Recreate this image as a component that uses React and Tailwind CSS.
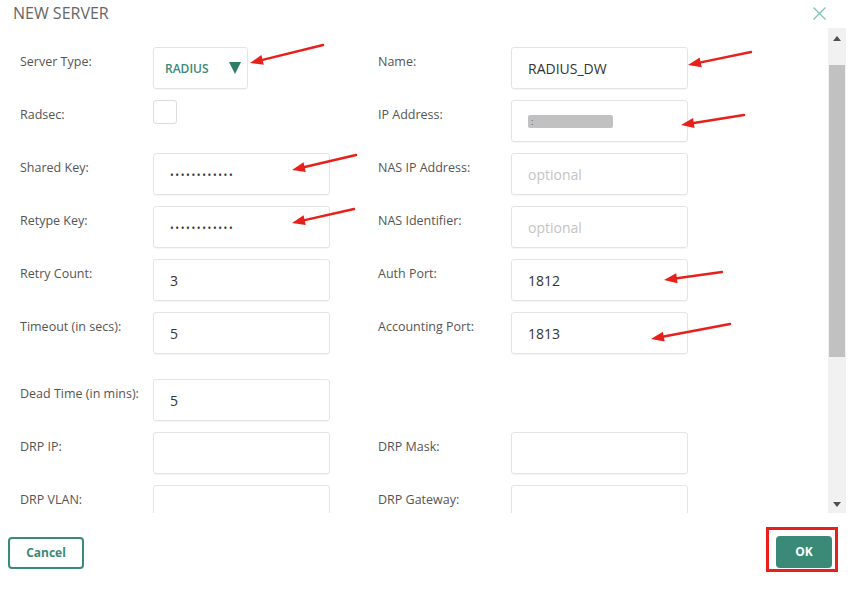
const rows = [
  { left: { label: "Server Type:", kind: "select" }, right: { label: "Name:", value: "RADIUS_DW" } },
  { left: { label: "Radsec:", kind: "checkbox" }, right: { label: "IP Address:", kind: "masked" } },
  { left: { label: "Shared Key:", value: "••••••••••••", kind: "password" }, right: { label: "NAS IP Address:", placeholder: "optional" } },
  { left: { label: "Retype Key:", value: "••••••••••••", kind: "password" }, right: { label: "NAS Identifier:", placeholder: "optional" } },
  { left: { label: "Retry Count:", value: "3" }, right: { label: "Auth Port:", value: "1812" } },
  { left: { label: "Timeout (in secs):", value: "5" }, right: { label: "Accounting Port:", value: "1813" } },
  { left: { label: "Dead Time (in mins):", value: "5" }, right: null, extraTop: true },
  { left: { label: "DRP IP:", value: "" }, right: { label: "DRP Mask:", value: "" } },
  { left: { label: "DRP VLAN:", value: "" }, right: { label: "DRP Gateway:", value: "" } },
];

function Field({ field }) {
  if (field.kind === "select") {
    return (
      <div className="flex h-[42px] w-[95px] items-center justify-between rounded-[3px] border border-[#e4e4e4] pl-[11px] pr-[6px] shadow-[0_1px_1px_rgba(0,0,0,0.04)]">
        <span className="pt-[2px] text-[12px] font-semibold text-[#3a8a78]">RADIUS</span>
        <svg width="12" height="12" viewBox="0 0 12 12">
          <path d="M0 0 L12 0 L6 12 Z" fill="#2f7d69" />
        </svg>
      </div>
    );
  }
  if (field.kind === "checkbox") {
    return <div className="h-[24px] w-[24px] rounded-[3px] border border-[#dcdcdc]" />;
  }
  return (
    <div className="flex h-[42px] w-[177px] items-center rounded-[3px] border border-[#e4e4e4] pl-[16px] shadow-[0_1px_1px_rgba(0,0,0,0.04)]">
      {field.kind === "masked" ? (
        <span className="flex h-[13px] w-[85px] items-center rounded-[2px] bg-[#c1c1c1] pl-[3px] text-[9px] leading-none text-[#555]">:</span>
      ) : field.kind === "password" ? (
        <span className="pt-[2px] text-[10px] tracking-[1.6px] text-[#333]">{field.value}</span>
      ) : field.placeholder ? (
        <span className="pt-[1px] text-[14px] text-[#c4c4c4]">{field.placeholder}</span>
      ) : (
        <span className="pt-[1px] text-[14px] text-[#333]">{field.value}</span>
      )}
    </div>
  );
}

function Cell({ field }) {
  if (!field) return <div className="w-[310px]" />;
  return (
    <div className="flex w-[310px] items-start">
      <div className="w-[133px] pt-[6px] text-[12.5px] leading-[18px] text-[#555]">{field.label}</div>
      <Field field={field} />
    </div>
  );
}

function Arrow({ x1, y1, x2, y2 }) {
  const a = Math.atan2(y2 - y1, x2 - x1);
  const len = 13;
  const w = 5;
  const bx = x2 - len * Math.cos(a);
  const by = y2 - len * Math.sin(a);
  const px = -Math.sin(a) * w;
  const py = Math.cos(a) * w;
  return (
    <g>
      <line x1={x1} y1={y1} x2={bx} y2={by} stroke="#e8201c" strokeWidth="2.5" strokeLinecap="round" />
      <polygon points={`${x2},${y2} ${bx + px},${by + py} ${bx - px},${by - py}`} fill="#e8201c" />
    </g>
  );
}

export default function App() {
  return (
    <div className="relative flex h-[593px] w-[868px] flex-col overflow-hidden bg-white font-['Open_Sans',sans-serif]">
      <div className="flex h-[28px] shrink-0 items-start justify-between pl-[13px] pr-[42px]">
        <span className="pt-[1px] text-[16px] leading-[24px] text-[#666]">NEW SERVER</span>
        <svg className="mt-[7px]" width="13" height="13" viewBox="0 0 13 13">
          <path d="M0.5 0.5 L12.5 12.5 M12.5 0.5 L0.5 12.5" stroke="#86c3b5" strokeWidth="1.4" />
        </svg>
      </div>

      <div className="flex h-[485px] shrink-0">
        <div className="w-[828px] overflow-hidden pl-[20px] pt-[19px]">
          {rows.map((r, i) => (
            <div key={i} className={`flex h-[42px] gap-[48px] mb-[11px] ${r.extraTop ? "mt-[25px]" : ""}`}>
              <Cell field={r.left} />
              <Cell field={r.right} />
            </div>
          ))}
        </div>
        <div className="flex w-[18px] flex-col items-center bg-[#f1f1f1]">
          <div className="flex h-[18px] w-full items-center justify-center pt-[2px]">
            <svg width="8" height="5" viewBox="0 0 8 5"><path d="M0 5 L4 0 L8 5 Z" fill="#505050" /></svg>
          </div>
          <div className="mt-[19px] h-[292px] w-[16px] bg-[#c1c1c1]" />
          <div className="flex-1" />
          <div className="flex h-[18px] w-full items-center justify-center">
            <svg width="8" height="5" viewBox="0 0 8 5"><path d="M0 0 L8 0 L4 5 Z" fill="#505050" /></svg>
          </div>
        </div>
      </div>

      <div className="flex items-start justify-between pl-[8px] pr-[30px] pt-[14px]">
        <button className="mt-[10px] h-[32px] w-[76px] rounded-[4px] border-2 border-[#3a8a78] text-[12px] font-bold text-[#3a8a78]">
          Cancel
        </button>
        <div className="border-[3px] border-[#e8201c] pb-[1px] pl-[7px] pr-[3px] pt-[6px]">
          <button className="block h-[32px] w-[56px] rounded-[4px] bg-[#3b8a77] text-[12px] font-bold text-white">
            OK
          </button>
        </div>
      </div>

      <svg className="pointer-events-none absolute left-0 top-0" width="868" height="593">
        <Arrow x1={323} y1={45} x2={250} y2={63} />
        <Arrow x1={751} y1={52} x2={688} y2={65} />
        <Arrow x1={744} y1={115} x2={681} y2={125} />
        <Arrow x1={356} y1={155} x2={292} y2={170} />
        <Arrow x1={354} y1={209} x2={292} y2={223} />
        <Arrow x1={722} y1={272} x2={664} y2={280} />
        <Arrow x1={730} y1={324} x2={651} y2={339} />
      </svg>
    </div>
  );
}
